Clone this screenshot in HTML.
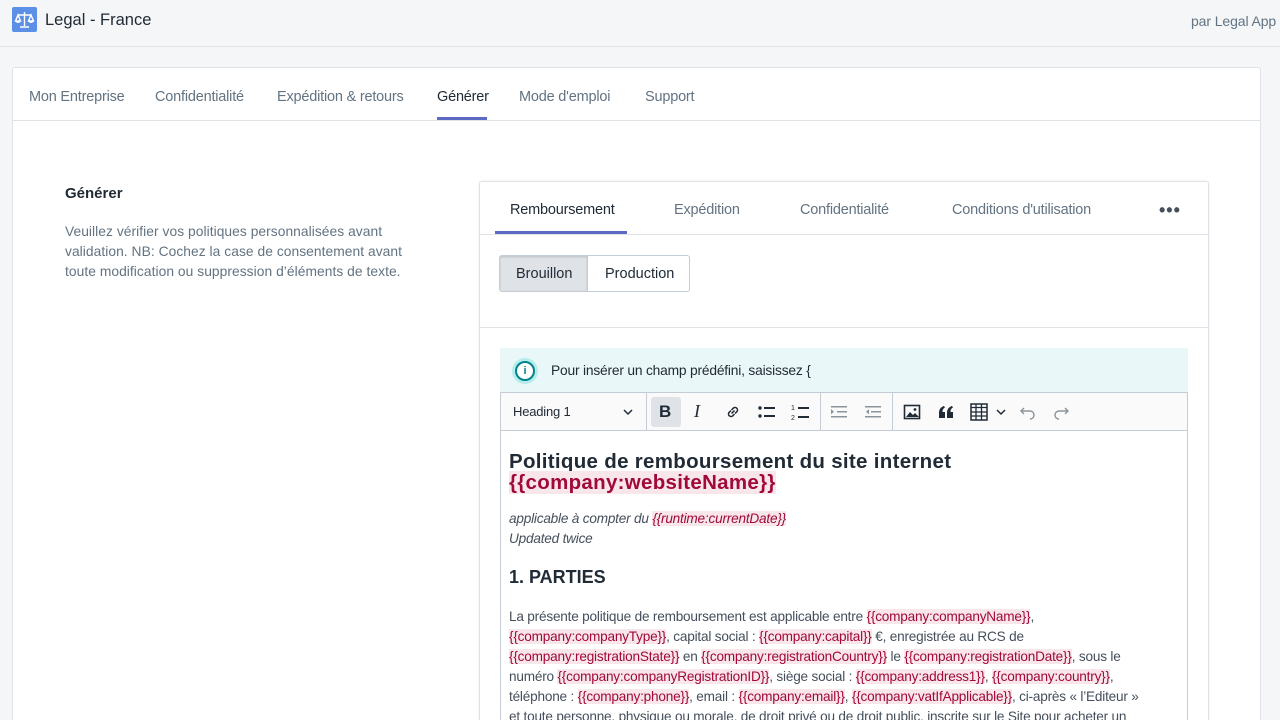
<!DOCTYPE html>
<html style="width:1280px;height:720px;overflow:hidden"><head><meta charset="utf-8">
<style>
*{box-sizing:border-box;margin:0;padding:0}
body{width:1280px;height:720px;overflow:hidden;background:#f4f6f8;font-family:"Liberation Sans",sans-serif;color:#212b36;position:relative}
.abs{position:absolute}
.top{left:0;top:0;width:1280px;height:47px;border-bottom:1px solid #dfe3e8;background:#f4f6f8}
.card{left:12px;top:67px;width:1249px;height:653px;background:#fff;border:1px solid #dfe3e8;border-bottom:none;border-radius:3px 3px 0 0}
.tab{position:absolute;top:89px;font-size:14.5px;color:#637381;letter-spacing:-0.2px}
.inner{left:479px;top:181px;width:730px;height:539px;background:#fff;border:1px solid #dfe3e8;border-bottom:none;border-radius:3px 3px 0 0;box-shadow:0 0 2px rgba(0,0,0,.08)}
.itab{position:absolute;top:202px;font-size:14.5px;color:#637381;letter-spacing:-0.2px}
.ph{background:#f9e6ea;color:#a0093a}
.ed{left:500px;top:430px;width:688px;height:290px;border:1px solid #c4cdd5;border-bottom:none;background:#fff}
.p{font-size:13.6px;line-height:20px;letter-spacing:-0.2px;color:#454f5b;white-space:nowrap}
</style></head><body>
<div class="abs top"></div>
<div class="abs" style="left:12px;top:7px;width:25px;height:25px;background:#5c8fe6;border-radius:2px">
<svg width="25" height="25" viewBox="0 0 25 25"><g stroke="#fff" stroke-width="1.4" fill="none"><path d="M12.5 5v14M6 8h13M8 20h9"/><path d="M6 8l-2.5 6h5zM19 8l-2.5 6h5z"/></g><path d="M3.5 14a2.5 2 0 0 0 5 0zM16.5 14a2.5 2 0 0 0 5 0z" fill="#fff"/></svg></div>
<div class="abs" style="left:45px;top:11px;font-size:16.5px;color:#212b36">Legal - France</div>
<div class="abs" style="left:1191px;top:13px;font-size:14px;color:#637381;letter-spacing:-0.1px">par Legal App</div>

<div class="abs card"></div>
<div class="abs" style="left:13px;top:120px;width:1247px;height:1px;background:#dfe3e8"></div>
<div class="tab" style="left:29px">Mon Entreprise</div>
<div class="tab" style="left:155px">Confidentialité</div>
<div class="tab" style="left:277px">Expédition &amp; retours</div>
<div class="tab" style="left:437px;color:#212b36">Générer</div>
<div class="abs" style="left:437px;top:117px;width:50px;height:3px;background:#5c6ac4"></div>
<div class="tab" style="left:519px">Mode d'emploi</div>
<div class="tab" style="left:645px">Support</div>

<div class="abs" style="left:65px;top:185px;font-size:15px;font-weight:bold;color:#212b36">Générer</div>
<div class="abs" style="left:65px;top:222px;font-size:13.8px;line-height:20px;color:#637381;letter-spacing:0.05px;white-space:nowrap">Veuillez vérifier vos politiques personnalisées avant<br>validation. NB: Cochez la case de consentement avant<br>toute modification ou suppression d’éléments de texte.</div>

<div class="abs inner"></div>
<div class="abs" style="left:480px;top:234px;width:728px;height:1px;background:#dfe3e8"></div>
<div class="itab" style="left:510px;color:#212b36">Remboursement</div>
<div class="abs" style="left:495px;top:231px;width:132px;height:3px;background:#5c6ac4"></div>
<div class="itab" style="left:674px">Expédition</div>
<div class="itab" style="left:800px">Confidentialité</div>
<div class="itab" style="left:952px">Conditions d'utilisation</div>
<div class="abs" style="left:1159px;top:200px;font-size:18px;color:#454f5b;letter-spacing:1px;font-weight:bold">•••</div>

<div class="abs" style="left:499px;top:255px;width:191px;height:37px;border:1px solid #c4cdd5;border-radius:3px;background:#fff"></div>
<div class="abs" style="left:500px;top:256px;width:88px;height:35px;background:#dfe3e8;border-right:1px solid #c4cdd5;box-shadow:inset 0 1px 2px rgba(0,0,0,.15)"></div>
<div class="abs" style="left:516px;top:266px;font-size:14.5px;color:#212b36">Brouillon</div>
<div class="abs" style="left:605px;top:266px;font-size:14.5px;color:#212b36">Production</div>
<div class="abs" style="left:480px;top:327px;width:728px;height:1px;background:#dfe3e8"></div>

<div class="abs" style="left:500px;top:348px;width:688px;height:44px;background:#eaf7f8"></div>
<div class="abs" style="left:512px;top:358px;width:26px;height:26px;border-radius:50%;background:#b7ecec"></div>
<div class="abs" style="left:515px;top:361px;width:20px;height:20px;border-radius:50%;border:2px solid #00848e;background:#fff;font-size:11px;font-weight:bold;color:#00848e;text-align:center;line-height:16px">i</div>
<div class="abs" style="left:551px;top:363px;font-size:13.8px;color:#212b36;letter-spacing:-0.2px">Pour insérer un champ prédéfini, saisissez {</div>

<div class="abs" style="left:500px;top:392px;width:688px;height:39px;border:1px solid #c4cdd5;background:#fafafa"></div>
<div class="abs" style="left:513px;top:404px;font-size:13px;color:#212b36;letter-spacing:-0.2px">Heading 1</div>
<svg class="abs" style="left:622px;top:407px" width="12" height="10"><path d="M2 3l4 4 4-4" stroke="#212b36" stroke-width="1.5" fill="none"/></svg>
<div class="abs" style="left:646px;top:393px;width:1px;height:37px;background:#c4cdd5"></div>
<div class="abs" style="left:651px;top:397px;width:30px;height:30px;background:#dfe3e8;border-radius:3px"></div>
<div class="abs" style="left:659px;top:402px;font-size:17px;font-weight:bold">B</div>
<div class="abs" style="left:694px;top:401px;font-size:18px;font-style:italic;font-family:'Liberation Serif',serif">I</div>
<svg class="abs" style="left:724px;top:403px" width="18" height="18" viewBox="0 0 18 18"><g stroke="#212b36" stroke-width="1.5" fill="none"><path d="M7.5 10.5l3-3"/><path d="M7 7.5l-2 2a2.5 2.5 0 0 0 3.5 3.5l2-2"/><path d="M11 10.5l2-2a2.5 2.5 0 0 0-3.5-3.5l-2 2"/></g></svg>
<svg class="abs" style="left:757px;top:403px" width="20" height="18"><g fill="#212b36"><circle cx="3" cy="5" r="1.7"/><circle cx="3" cy="13" r="1.7"/><rect x="7" y="4" width="11" height="2"/><rect x="7" y="12" width="11" height="2"/></g></svg>
<svg class="abs" style="left:790px;top:402px" width="20" height="20"><g fill="#212b36"><rect x="8" y="5" width="11" height="2"/><rect x="8" y="14" width="11" height="2"/><text x="1" y="8" font-size="7" font-family="Liberation Sans">1</text><text x="1" y="18" font-size="7" font-family="Liberation Sans">2</text></g></svg>
<div class="abs" style="left:820px;top:393px;width:1px;height:37px;background:#c4cdd5"></div>
<svg class="abs" style="left:829px;top:403px" width="20" height="18"><g fill="#8c949b"><rect x="2" y="3" width="16" height="1.5"/><rect x="8" y="8" width="10" height="1.5"/><rect x="2" y="13" width="16" height="1.5"/><path d="M2 6l3 2.7-3 2.7z"/></g></svg>
<svg class="abs" style="left:863px;top:403px" width="20" height="18"><g fill="#8c949b"><rect x="2" y="3" width="16" height="1.5"/><rect x="8" y="8" width="10" height="1.5"/><rect x="2" y="13" width="16" height="1.5"/><path d="M6 6l-3 2.7 3 2.7z"/></g></svg>
<div class="abs" style="left:892px;top:393px;width:1px;height:37px;background:#c4cdd5"></div>
<svg class="abs" style="left:903px;top:403px" width="18" height="18"><rect x="1.5" y="2.5" width="15" height="13" stroke="#212b36" stroke-width="1.6" fill="none"/><path d="M3 14l4-5 3 3 2-2 4 4z" fill="#212b36"/><circle cx="12" cy="6.5" r="1.4" fill="#212b36"/></svg>
<svg class="abs" style="left:937px;top:404px" width="18" height="16" viewBox="0 0 18 16"><g fill="#212b36"><path d="M2 14V9c0-4 2-6 5-7l1 1.5C6 4.5 5.5 6 5.5 8H8v6z"/><path d="M10 14V9c0-4 2-6 5-7l1 1.5c-2 1-2.5 2.5-2.5 4.5H16v6z"/></g></svg>
<svg class="abs" style="left:970px;top:403px" width="18" height="18"><rect x="1" y="1" width="16" height="16" fill="none" stroke="#212b36" stroke-width="1.5"/><path d="M1 4.5h16M1 9h16M1 13h16M6 1v16M11.5 1v16" stroke="#212b36" stroke-width="1.3"/></svg>
<svg class="abs" style="left:995px;top:407px" width="12" height="10"><path d="M2 3l4 4 4-4" stroke="#212b36" stroke-width="1.5" fill="none"/></svg>
<svg class="abs" style="left:1019px;top:403px" width="18" height="18"><path d="M5 5L2 8l3 3M2 8h9a4 4 0 0 1 0 8" stroke="#8c949b" stroke-width="1.4" fill="none"/></svg>
<svg class="abs" style="left:1052px;top:403px" width="18" height="18"><path d="M13 5l3 3-3 3M16 8H7a4 4 0 0 0 0 8" stroke="#8c949b" stroke-width="1.4" fill="none"/></svg>

<div class="abs ed"></div>
<div class="abs" style="left:509px;top:451px;font-size:20.5px;font-weight:bold;line-height:21px;color:#212b36;letter-spacing:0.3px">Politique de remboursement du site internet<br><span class="ph">{{company:websiteName}}</span></div>
<div class="abs p" style="left:509px;top:509px;font-style:italic">applicable à compter du <span class="ph">{{runtime:currentDate}}</span><br>Updated twice</div>
<div class="abs" style="left:509px;top:567px;font-size:18px;font-weight:bold;color:#212b36">1. PARTIES</div>
<div class="abs p" style="left:509px;top:607px">La présente politique de remboursement est applicable entre <span class="ph">{{company:companyName}}</span>,<br><span class="ph">{{company:companyType}}</span>, capital social : <span class="ph">{{company:capital}}</span> €, enregistrée au RCS de<br><span class="ph">{{company:registrationState}}</span> en <span class="ph">{{company:registrationCountry}}</span> le <span class="ph">{{company:registrationDate}}</span>, sous le<br>numéro <span class="ph">{{company:companyRegistrationID}}</span>, siège social : <span class="ph">{{company:address1}}</span>, <span class="ph">{{company:country}}</span>,<br>téléphone : <span class="ph">{{company:phone}}</span>, email : <span class="ph">{{company:email}}</span>, <span class="ph">{{company:vatIfApplicable}}</span>, ci-après « l’Editeur »<br>et toute personne, physique ou morale, de droit privé ou de droit public, inscrite sur le Site pour acheter un</div>
</body></html>
